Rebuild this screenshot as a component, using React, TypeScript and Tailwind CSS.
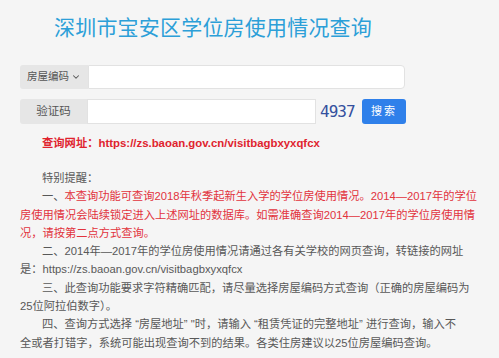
import { ChevronDown } from "lucide-react";

const cjk = "font-['Liberation_Sans','Noto_Sans_CJK_SC',sans-serif]";

function Red({ children }: { children: React.ReactNode }) {
  return <span className="text-[#e2333d]">{children}</span>;
}

export default function App() {
  return (
    <div className={`h-[358px] w-[499px] overflow-hidden bg-[#f5f5f5] ${cjk}`}>
      <h1 className="pl-[54px] pt-[14px] text-[21px] leading-[28px] tracking-[0.2px] text-[#2c9fd8]">
        深圳市宝安区学位房使用情况查询
      </h1>

      <div className="mt-[23px] flex h-[24px] w-[385px] ml-[20px]">
        <button className="flex w-[68px] items-center justify-center gap-[2px] rounded-l-[3px] bg-[#e6e6e6] text-[10.5px] text-[#555]">
          房屋编码
          <ChevronDown size={10} strokeWidth={2.5} />
        </button>
        <input className="flex-1 rounded-r-[4px] border border-[#e2e2e2] bg-white outline-none" />
      </div>

      <div className="ml-[20px] mt-[10px] flex h-[25px] w-[386px] items-center">
        <div className="flex h-full w-[67px] items-center justify-center rounded-l-[3px] bg-[#e6e6e6] text-[11.5px] text-[#555]">
          验证码
        </div>
        <input className="h-full w-[229px] border border-[#e2e2e2] bg-white outline-none" />
        <span className="ml-[4px] w-[42px] font-['DejaVu_Sans_Mono',monospace] text-[16px] font-normal tracking-[-1px] text-[#34509e]">
          4937
        </span>
        <button className="ml-auto h-full w-[44px] rounded-[3px] bg-[#2f80ea] text-[11px] tracking-[2px] text-white">
          搜索
        </button>
      </div>

      <p className="ml-[42px] mt-[10px] text-[11.3px] font-bold leading-[18px] text-[#e0232e]">
        查询网址：<span className="text-[11.4px]">https://zs.baoan.gov.cn/visitbagbxyxqfcx</span>
      </p>

      <div className="ml-[20px] mt-[17px] w-[470px] whitespace-nowrap text-[11.25px] leading-[18.3px] text-[#585858] [&>p]:h-[18.3px]">
        <p className="pl-[22px]">特别提醒：</p>
        <p className="pl-[22px]">
          一、<Red>本查询功能可查询2018年秋季起新生入学的学位房使用情况。2014—2017年的学位</Red>
        </p>
        <p>
          <Red>房使用情况会陆续锁定进入上述网址的数据库。如需准确查询2014—2017年的学位房使用情</Red>
        </p>
        <p>
          <Red>况，请按第二点方式查询。</Red>
        </p>
        <p className="pl-[22px]">二、2014年—2017年的学位房使用情况请通过各有关学校的网页查询，转链接的网址</p>
        <p>是：https://zs.baoan.gov.cn/visitbagbxyxqfcx</p>
        <p className="pl-[22px]">三、此查询功能要求字符精确匹配，请尽量选择房屋编码方式查询（正确的房屋编码为</p>
        <p>25位阿拉伯数字）。</p>
        <p className="pl-[22px]">四、查询方式选择 “房屋地址” "时，请输入 “租赁凭证的完整地址” 进行查询，输入不</p>
        <p>全或者打错字，系统可能出现查询不到的结果。各类住房建议以25位房屋编码查询。</p>
      </div>
    </div>
  );
}
